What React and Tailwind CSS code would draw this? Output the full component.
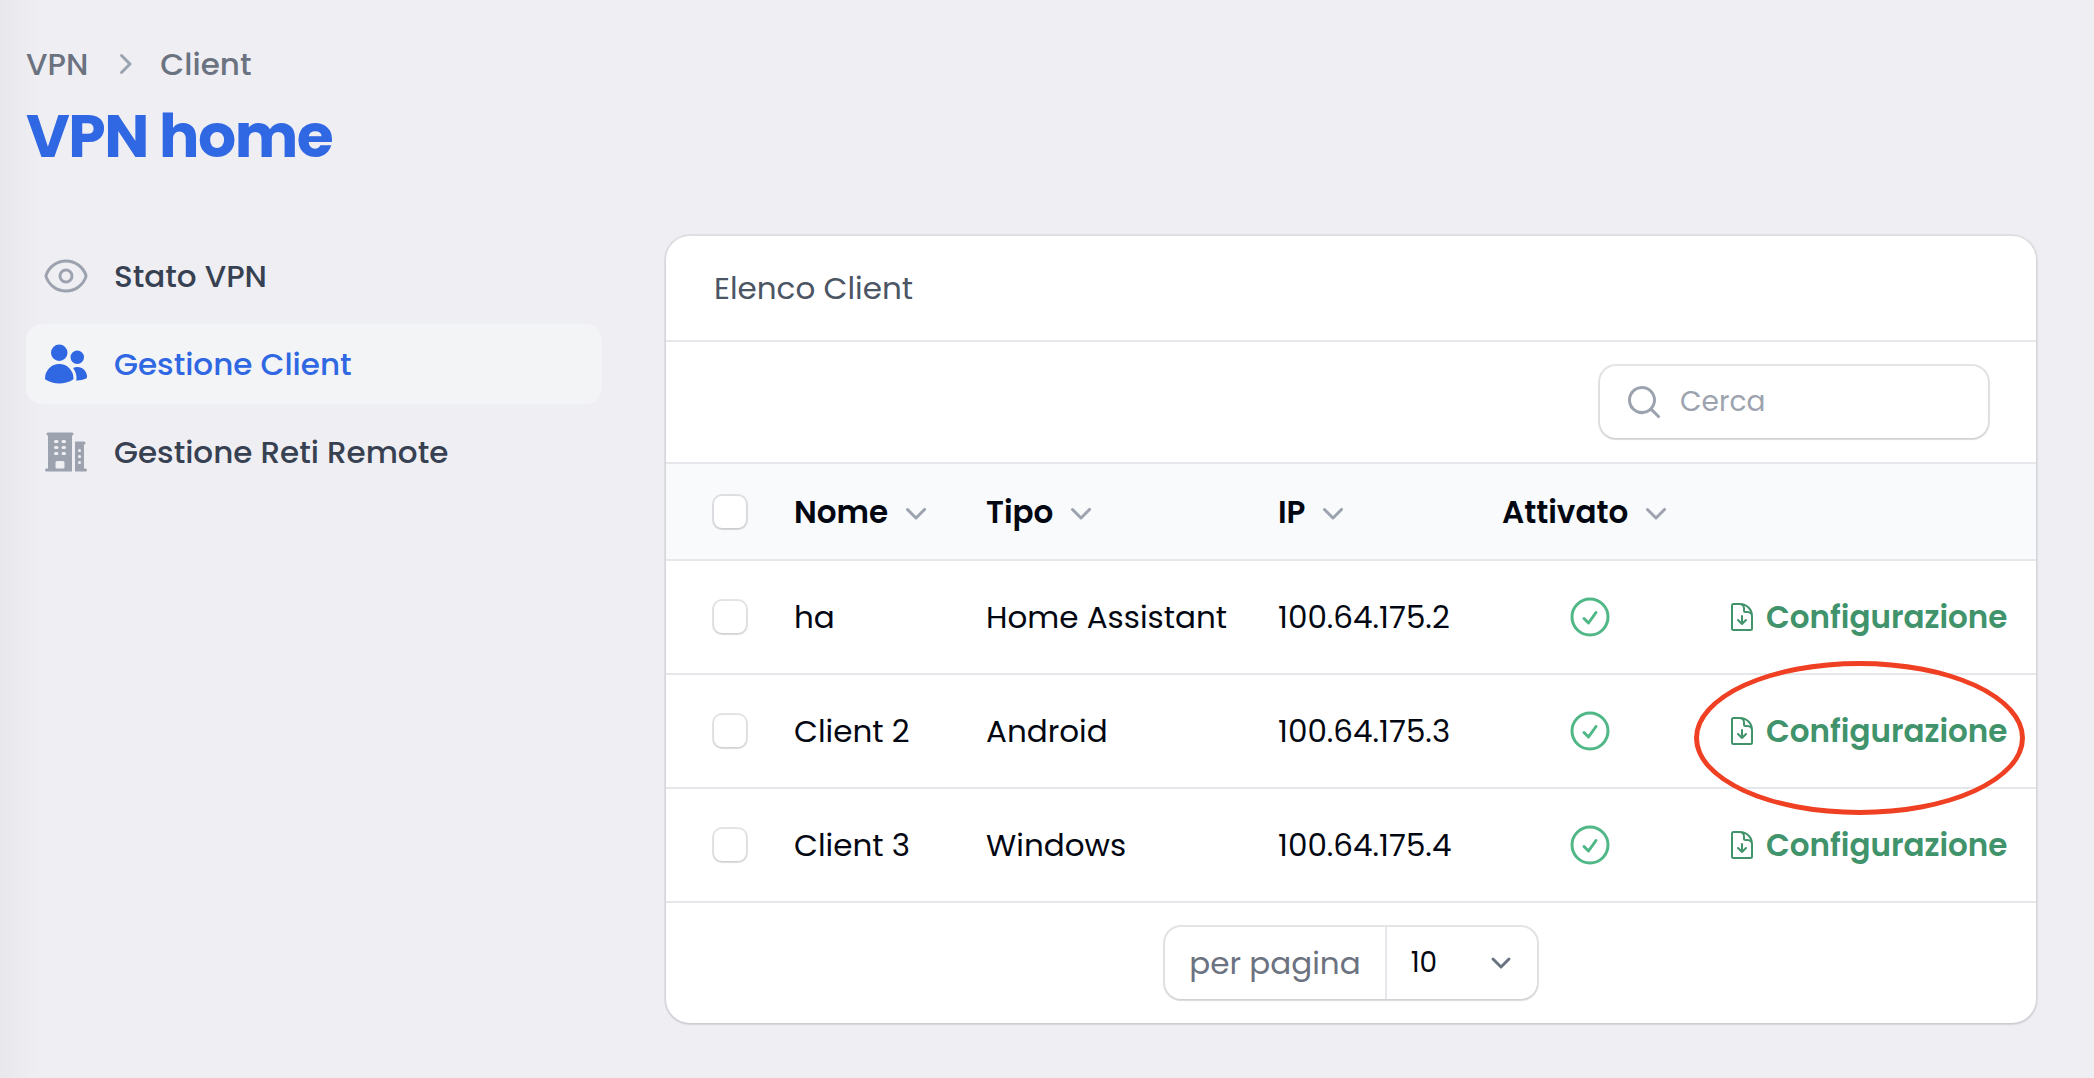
import { useState } from 'react';
import {
  HiBuildingOffice2,
  HiMiniChevronDown,
  HiMiniChevronRight,
  HiMiniMagnifyingGlass,
  HiOutlineCheckCircle,
  HiOutlineDocumentArrowDown,
  HiOutlineEye,
  HiUsers
} from 'react-icons/hi2';

const navItems = [
  { label: 'Stato VPN', icon: HiOutlineEye },
  { label: 'Gestione Client', icon: HiUsers, active: true },
  { label: 'Gestione Reti Remote', icon: HiBuildingOffice2 }
];

const columns = [
  { label: 'Nome', width: 'min-w-48' },
  { label: 'Tipo', width: 'min-w-[292px]' },
  { label: 'IP', width: 'min-w-56' },
  { label: 'Attivato', width: 'min-w-56' }
];

const clients = [
  { nome: 'ha', tipo: 'Home Assistant', ip: '100.64.175.2' },
  { nome: 'Client 2', tipo: 'Android', ip: '100.64.175.3', circled: true },
  { nome: 'Client 3', tipo: 'Windows', ip: '100.64.175.4' }
];

function Checkbox({ label, checked, onChange }) {
  return (
    <input
      type="checkbox"
      aria-label={label}
      checked={checked}
      onChange={onChange}
      className="block size-8 appearance-none rounded-lg bg-white shadow-sm ring-2 ring-gray-950/10 checked:bg-blue-600"
    />
  );
}

function Sidebar() {
  return (
    <nav className="w-[576px] shrink-0">
      <ul className="flex flex-col gap-2">
        {navItems.map(({ label, icon: Icon, active }) => (
          <li key={label}>
            <a
              href="#"
              className={`flex items-center gap-6 rounded-2xl px-4 py-4 font-medium ${
                active ? 'bg-[#f3f4f6] text-[#3067e3]' : 'text-[#374151]'
              }`}
            >
              <Icon className={`size-12 ${active ? 'text-[#3067e3]' : 'text-[#9ca3af]'}`} />
              {label}
            </a>
          </li>
        ))}
      </ul>
    </nav>
  );
}

export default function App() {
  const [selected, setSelected] = useState([]);
  const [search, setSearch] = useState('');
  const [perPage, setPerPage] = useState('10');

  const toggle = (nome) => {
    setSelected(selected.includes(nome) ? selected.filter((n) => n !== nome) : [...selected, nome]);
  };

  const toggleAll = () => {
    setSelected(selected.length === clients.length ? [] : clients.map((c) => c.nome));
  };

  const visible = clients.filter((c) => c.nome.toLowerCase().includes(search.toLowerCase()));

  return (
    <div className="min-h-screen bg-[#efeef3] bg-[linear-gradient(to_right,#e8e8ec,#efeef3_40px)] pt-10 pr-[58px] pb-12 pl-[26px] font-['Poppins','Inter',sans-serif] text-[31px] leading-12 text-[#030712]">
      <header>
        <nav className="flex items-center gap-4 font-medium text-[#6b7280]">
          <a href="#">VPN</a>
          <HiMiniChevronRight className="size-10 text-[#9ca3af]" />
          <a href="#">Client</a>
        </nav>
        <h1 className="mt-3 text-[60px] leading-[72px] font-bold tracking-tight text-[#3067e3]">VPN home</h1>
      </header>

      <div className="mt-16 flex items-start gap-16">
        <Sidebar />

        <main className="min-w-0 flex-1 rounded-3xl bg-white shadow-sm ring-2 ring-gray-950/6">
          <h2 className="border-b-2 border-[#e5e7eb] px-12 py-7 text-[#4b5563]">Elenco Client</h2>

          <div className="flex justify-end border-b-2 border-[#e5e7eb] px-12 py-6">
            <label className="flex h-18 w-[388px] items-center gap-4 rounded-2xl bg-white pl-6 shadow-sm ring-2 ring-gray-950/10">
              <HiMiniMagnifyingGlass className="size-10 shrink-0 text-[#9ca3af]" />
              <input
                type="search"
                aria-label="Cerca"
                placeholder="Cerca"
                value={search}
                onChange={(e) => setSearch(e.target.value)}
                className="w-full min-w-0 bg-transparent pr-6 text-[28px] outline-none placeholder:text-[#9ca3af]"
              />
            </label>
          </div>

          <table className="w-full whitespace-nowrap">
            <thead>
              <tr className="h-24 border-b-2 border-[#e5e7eb] bg-[#f9fafc]">
                <th className="pr-6 pl-12">
                  <Checkbox
                    label="Seleziona tutto"
                    checked={selected.length === clients.length}
                    onChange={toggleAll}
                  />
                </th>
                {columns.map(({ label, width }) => (
                  <th key={label} className={`px-6 ${width}`}>
                    <button type="button" className="flex items-center gap-2 font-semibold">
                      {label}
                      <HiMiniChevronDown className="size-10 text-[#9ca3af]" />
                    </button>
                  </th>
                ))}
                <th className="w-full" />
              </tr>
            </thead>
            <tbody>
              {visible.map((client) => (
                <tr key={client.nome} className="h-[114px] border-b-2 border-[#e5e7eb]">
                  <td className="pr-6 pl-12">
                    <Checkbox
                      label={client.nome}
                      checked={selected.includes(client.nome)}
                      onChange={() => toggle(client.nome)}
                    />
                  </td>
                  <td className="px-6">{client.nome}</td>
                  <td className="px-6">{client.tipo}</td>
                  <td className="px-6">{client.ip}</td>
                  <td className="px-6">
                    <HiOutlineCheckCircle className="mx-auto size-12 text-[#50b787]" />
                  </td>
                  <td className="pl-6">
                    <a href="#" className="relative flex w-fit items-center gap-2 font-semibold text-[#40936b]">
                      <HiOutlineDocumentArrowDown className="size-8" />
                      Configurazione
                      {client.circled && (
                        <span className="pointer-events-none absolute -top-[46px] -right-[18px] -bottom-15 -left-8 rounded-[50%] border-5 border-[#ef4023]" />
                      )}
                    </a>
                  </td>
                </tr>
              ))}
            </tbody>
          </table>

          <div className="flex justify-center py-6">
            <div className="flex h-18 items-center rounded-2xl bg-white shadow-sm ring-2 ring-gray-950/10">
              <label htmlFor="per-page" className="border-r-2 border-[#e5e7eb] px-6 py-3 text-[#6b7280]">
                per pagina
              </label>
              <div className="relative">
                <select
                  id="per-page"
                  value={perPage}
                  onChange={(e) => setPerPage(e.target.value)}
                  className="block h-18 w-[150px] appearance-none rounded-r-2xl bg-transparent pl-6 text-[28px] outline-none"
                >
                  <option>10</option>
                  <option>25</option>
                  <option>50</option>
                </select>
                <svg
                  viewBox="0 0 20 20"
                  fill="none"
                  stroke="#6b7280"
                  strokeWidth="1.5"
                  strokeLinecap="round"
                  strokeLinejoin="round"
                  className="pointer-events-none absolute top-4 right-4 size-10"
                >
                  <path d="m6 8 4 4 4-4" />
                </svg>
              </div>
            </div>
          </div>
        </main>
      </div>
    </div>
  );
}
